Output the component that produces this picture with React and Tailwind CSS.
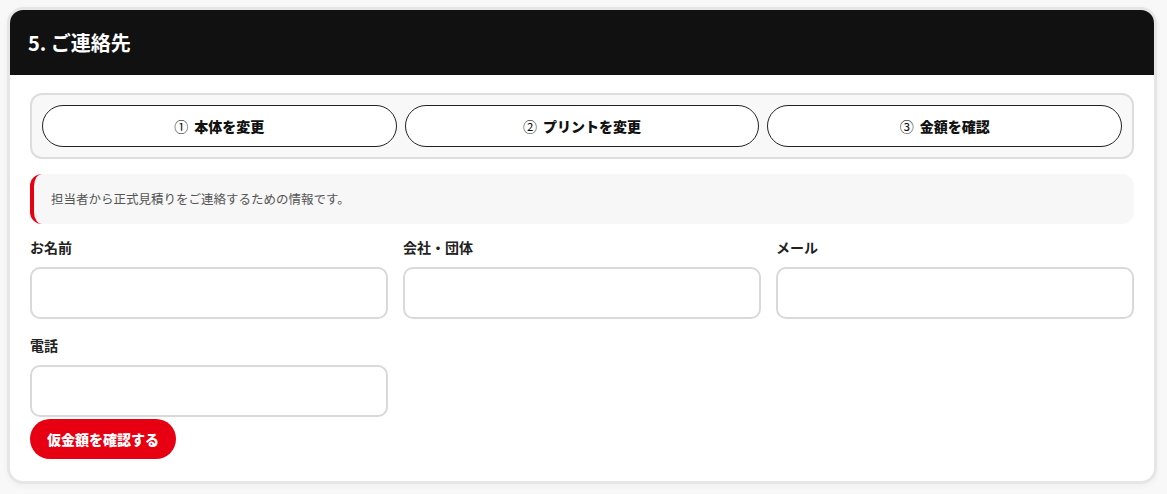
import React from "react";

const font = { fontFamily: '"Noto Sans CJK JP", "Noto Sans", sans-serif' };

function Field({ label }) {
  return (
    <div className="flex flex-col">
      <label className="text-[14px] leading-[20px] font-bold text-[#222] mb-[10px]">{label}</label>
      <div className="h-[52px] rounded-[10px] border-2 border-[#d9d9d9] bg-white"></div>
    </div>
  );
}

export default function App() {
  const tabs = [
    ["①", "本体を変更"],
    ["②", "プリントを変更"],
    ["③", "金額を確認"],
  ];
  return (
    <div className="min-h-screen bg-[#f8f8f8] pt-[7px] pl-[7px]" style={font}>
      <div className="w-[1150px] rounded-[16px] border-[3px] border-[#e6e6e6] bg-white overflow-hidden shadow-[0_2px_6px_rgba(0,0,0,0.04)]">
        <div className="h-[65px] bg-[#111111] flex items-center px-[18px]">
          <h2 className="text-white text-[20px] font-bold leading-none">5. ご連絡先</h2>
        </div>
        <div className="px-[20px] pt-[18px] pb-[22px]">
          <div className="rounded-[12px] border-2 border-[#dddddd] bg-[#f8f8f8] p-[10px] grid grid-cols-3 gap-[8px]">
            {tabs.map(([n, t]) => (
              <button
                key={t}
                className="h-[42px] rounded-full border border-[#222] bg-white text-[14px] font-bold text-[#111] flex items-center justify-center"
              >
                <span className="mr-[6px] font-normal">{n}</span>
                <span className="font-black">{t}</span>
              </button>
            ))}
          </div>
          <div className="mt-[15px] h-[50px] rounded-[12px] border-l-4 border-[#e60012] bg-[#f7f7f7] flex items-center pl-[17px]">
            <p className="text-[12.5px] text-[#555]">担当者から正式見積りをご連絡するための情報です。</p>
          </div>
          <div className="mt-[13px] grid grid-cols-3 gap-x-[15px] gap-y-[16px]">
            <Field label="お名前" />
            <Field label="会社・団体" />
            <Field label="メール" />
            <Field label="電話" />
          </div>
          <button className="mt-[2px] h-[40px] px-[17px] rounded-full bg-[#e60012] text-white text-[14px] font-black">
            仮金額を確認する
          </button>
        </div>
      </div>
    </div>
  );
}
